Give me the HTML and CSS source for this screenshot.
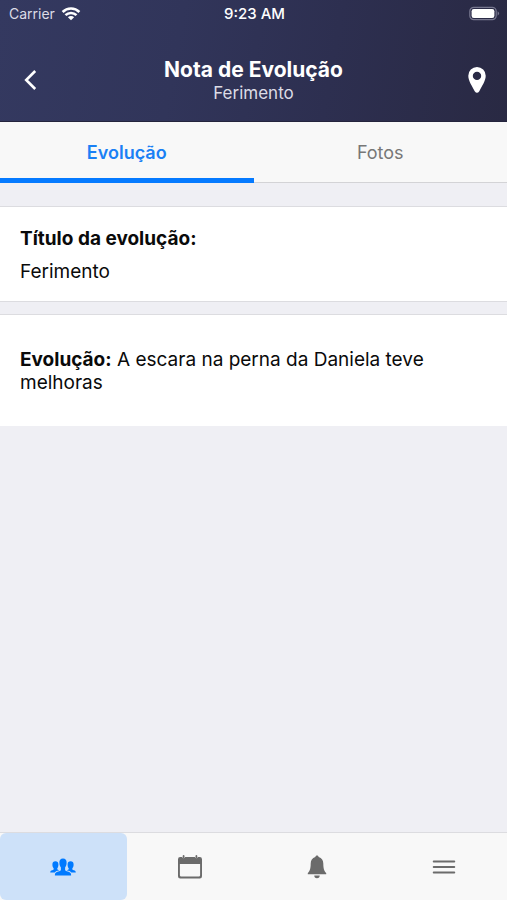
FILE: index.html
```html
<!DOCTYPE html>
<html lang="pt-BR">
<head>
<meta charset="utf-8">
<meta name="viewport" content="width=device-width, initial-scale=1">
<title>Nota de Evolução</title>
<link rel="stylesheet" href="styles.css">
</head>
<body>
<header class="header">
  <div class="status">
    <div class="carrier">
      <span>Carrier</span>
      <svg width="20" height="14" viewBox="0 0 20 14" fill="none" stroke="#fff" stroke-width="2.6" aria-hidden="true">
        <path d="M1.6 5a12 12 0 0 1 16.8 0"/>
        <path d="M4.5 8.200a7.800 7.800 0 0 1 11 0"/>
        <path d="M10 13.300 6.900 10.200a4.400 4.400 0 0 1 6.200 0z" fill="#fff" stroke="none"/>
      </svg>
    </div>
    <time class="clock">9:23 AM</time>
    <svg class="battery" width="31" height="16" viewBox="0 0 31 16" aria-hidden="true">
      <rect x=".8" y="1.300" width="26.400" height="12.400" rx="4" fill="none" stroke="#77778f" stroke-width="1.200"/>
      <rect x="2.600" y="3.100" width="22.800" height="8.800" rx="2.200" fill="#fff"/>
      <path d="M28.600 5.300q3 2.200 0 4.400z" fill="#77778f"/>
    </svg>
  </div>
  <div class="navbar">
    <button class="icon-button" type="button" aria-label="Voltar">
      <svg width="14" height="22" viewBox="0 0 14 22" fill="none" stroke="#fff" stroke-width="2.600" aria-hidden="true">
        <path d="M12.200 2 3.200 11l9 9"/>
      </svg>
    </button>
    <div class="heading">
      <h1 class="title">Nota de Evolução</h1>
      <p class="subtitle">Ferimento</p>
    </div>
    <button class="icon-button icon-button-end" type="button" aria-label="Localização">
      <svg width="18" height="26" viewBox="0 0 18 26" aria-hidden="true">
        <path fill="#fff" fill-rule="evenodd" d="M9 0a8.700 8.700 0 0 0-8.700 8.800C.3 13.800 4 19 6.700 24.200Q9 27.300 11.300 24.200C14 19 17.700 13.800 17.700 8.800A8.700 8.700 0 0 0 9 0zm0 4.700a4.200 4.200 0 1 1 0 8.400 4.200 4.200 0 0 1 0-8.400z"/>
      </svg>
    </button>
  </div>
</header>
<nav class="tabs" aria-label="Seções">
  <button class="tab tab-active" type="button">Evolução</button>
  <button class="tab" type="button">Fotos</button>
</nav>
<main class="content">
  <section class="card card-title">
    <h2 class="label">Título da evolução:</h2>
    <p class="value">Ferimento</p>
  </section>
  <section class="card card-note">
    <p class="note"><strong>Evolução:</strong> A escara na perna da Daniela teve melhoras</p>
  </section>
</main>
<nav class="footer" aria-label="Principal">
  <button class="foot-item foot-active" type="button" aria-label="Pacientes">
    <svg width="26" height="18" viewBox="0 0 26 18" fill="currentColor" aria-hidden="true">
      <path d="M13 .4c2.500 0 3.800 1.600 3.600 4.500-.1 2-.6 3.400-1.500 4.500v2.300c0 1.100 1.200 1.300 2.700 1.700 2.100.6 3.300 1.300 3.300 3.400v.8H4.900v-.8c0-2.100 1.200-2.800 3.300-3.400 1.500-.4 2.700-.6 2.700-1.700V9.400C10 8.300 9.500 6.900 9.400 4.900 9.200 2 10.500.4 13 .4z"/>
      <path d="M5.400 3.300c1.900 0 3 1.100 3 3.300 0 1.900-.4 3-1.200 3.900 0 1.300.9 1.500 2.200 1.800-2.200.5-3.900 1-4.700 2.300H.2c0-1.500.7-2 2-2.400 1-.3 1.700-.4 1.500-1.700-.9-1-1.300-2.100-1.300-3.900 0-2.200 1.100-3.300 3-3.300z"/>
      <path d="M20.600 3.300c-1.900 0-3 1.100-3 3.300 0 1.900.4 3 1.200 3.900 0 1.300-.9 1.500-2.200 1.800 2.200.5 3.900 1 4.700 2.300h4.500c0-1.500-.7-2-2-2.400-1-.3-1.700-.4-1.500-1.700.9-1 1.300-2.100 1.300-3.900 0-2.200-1.100-3.300-3-3.300z"/>
    </svg>
  </button>
  <button class="foot-item" type="button" aria-label="Agenda">
    <svg width="26" height="24" viewBox="0 0 26 24" aria-hidden="true">
      <path fill="currentColor" fill-rule="evenodd" d="M3.200 2H5a1.700 1.700 0 0 0 3.200 0h9.600A1.700 1.700 0 0 0 21 2h1.800q2.200 0 2.200 2.200v17q0 2.200-2.200 2.200H3.200Q1 23.400 1 21.200v-17Q1 2 3.200 2zM2.900 8.900v11.300q0 1.300 1.300 1.300h17.600q1.300 0 1.300-1.300V8.900z"/>
      <path d="M6.600.9v1.300M19.400.9v1.300" stroke="currentColor" stroke-width="1.800" stroke-linecap="round"/>
    </svg>
  </button>
  <button class="foot-item" type="button" aria-label="Notificações">
    <svg width="20" height="24" viewBox="0 0 20 24" fill="currentColor" aria-hidden="true">
      <path d="M10 .5c.9 0 1.500.6 1.700 1.500 3.200.9 4.500 3.400 4.600 6.500.1 4.800.6 7.300 2.900 9.500v1.200H.8V18c2.300-2.200 2.800-4.700 2.900-9.500.1-3.100 1.400-5.600 4.600-6.500.2-.9.800-1.500 1.700-1.500zM7.300 20.600h5.400a2.700 2.700 0 0 1-5.400 0z"/>
    </svg>
  </button>
  <button class="foot-item" type="button" aria-label="Menu">
    <svg width="24" height="14" viewBox="0 0 24 14" stroke="currentColor" stroke-width="1.900" stroke-linecap="round" aria-hidden="true">
      <path d="M1.700 1.500h20.600M1.700 7h20.600M1.700 12.500h20.600"/>
    </svg>
  </button>
</nav>
</body>
</html>
```
FILE: styles.css
```css
* {
  box-sizing: border-box;
}

body {
  margin: 0;
  min-height: 100vh;
  display: flex;
  flex-direction: column;
  background: #efeff4;
  color: #0a0a0a;
  font-family: Inter, "Liberation Sans", sans-serif;
  font-size: 19px;
  line-height: 23px;
}

h1,
h2,
p {
  margin: 0;
}

button {
  margin: 0;
  padding: 0;
  border: 0;
  background: none;
  color: inherit;
  font: inherit;
}

svg {
  display: block;
}

.header {
  color: #fff;
  background: linear-gradient(100deg, #343960 0%, #31355a 35%, #2d2f50 65%, #292943 100%);
  border-bottom: 1px solid #24243d;
}

.status {
  display: grid;
  grid-template-columns: 1fr auto 1fr;
  align-items: center;
  height: 28px;
  padding: 0 7px 0 9px;
  font-size: 14px;
  line-height: 20px;
}

.carrier {
  display: flex;
  align-items: center;
  gap: 6px;
  color: #dcdce6;
}

.clock {
  font-size: 15px;
  font-weight: 500;
}

.battery {
  justify-self: end;
}

.navbar {
  display: grid;
  grid-template-columns: 60px 1fr 60px;
  align-items: center;
  height: 93px;
  padding-top: 10px;
}

.icon-button {
  display: flex;
  align-items: center;
  justify-content: center;
  height: 48px;
}

.icon-button-end {
  justify-content: flex-end;
  padding-right: 21px;
}

.heading {
  padding-top: 4px;
  text-align: center;
}

.title {
  font-size: 21px;
  line-height: 24px;
  font-weight: 700;
}

.subtitle {
  font-size: 17px;
  line-height: 23px;
  color: #dcdce6;
}

.tabs {
  display: flex;
  height: 61px;
  background: #f8f8f8;
  border-bottom: 1px solid #d3d3d6;
}

.tab {
  flex: 1;
  margin-bottom: -1px;
  padding-top: 4px;
  border-bottom: 5px solid transparent;
  color: #777;
  font-size: 18px;
}

.tab-active {
  border-bottom-color: #057aff;
  color: #1a80f5;
  font-weight: 600;
}

.content {
  flex: 1;
  display: flex;
  flex-direction: column;
  gap: 12px;
  padding-top: 23px;
}

.card {
  padding: 0 20px;
  background: #fff;
  border-top: 1px solid #dcdce0;
  border-bottom: 1px solid #dcdce0;
}

.card-title {
  padding-top: 20px;
  padding-bottom: 18px;
}

.label {
  margin-bottom: 10px;
  font-size: 19px;
  line-height: 23px;
  font-weight: 700;
}

.card-note {
  padding-top: 33px;
  padding-bottom: 32px;
  border-bottom-color: #efeff4;
}

.note {
  max-width: 420px;
}

.note strong {
  font-weight: 700;
}

.footer {
  display: flex;
  height: 68px;
  background: #f8f8f8;
  border-top: 1px solid #dcdce0;
  color: #6b6b6b;
}

.foot-item {
  flex: 1;
  display: flex;
  align-items: center;
  justify-content: center;
}

.foot-active {
  border-radius: 6px;
  background: #cde1f9;
  color: #007aff;
}
```
